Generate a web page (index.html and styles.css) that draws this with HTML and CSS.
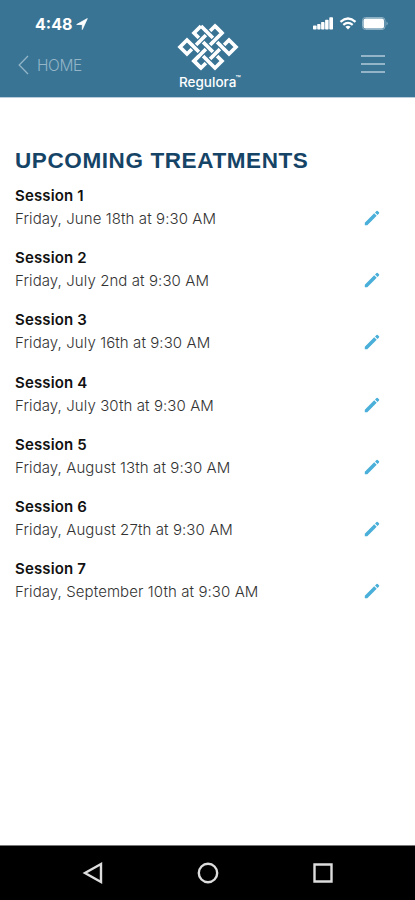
FILE: index.html
```html
<!DOCTYPE html>
<html lang="en">
<head>
<meta charset="utf-8">
<title>Regulora</title>
<link rel="stylesheet" href="styles.css">
</head>
<body>
<div class="screen">
  <header class="header">
    <div class="left">
      <div class="time">4:48 <svg width="12" height="12" viewBox="0 0 12 12"><path d="M11.300 .6 6.300 11.500V6.500H.7z" fill="#fff" stroke="#fff" stroke-width=".8" stroke-linejoin="round"/></svg></div>
      <a class="back"><svg width="11" height="20" viewBox="0 0 11 20"><path d="M10 1 1.200 10 10 19" fill="none" stroke="#93b5c7" stroke-width="1.300"/></svg><span>HOME</span></a>
    </div>
    <div class="brand">
      <svg class="knot" width="62" height="50" viewBox="-31 -25 62 50">
        <g transform="rotate(45) scale(9.900)" fill="none" stroke="#fff" stroke-width=".37">
          <path d="M-2-1H2V-2H1V2H0V1M-2-1V0H2V1H-2V2H-1V-2H0V2"/>
          <path d="M0 1V2H1M-1-2H0"/>
          <g stroke="#397495" stroke-width=".6">
            <path d="M-1.300-1h.6M.7-1h.6M-.3 0h.6M-1.300 1h.6M.7 1h.6M0-1.300v.6M-1-.3v.6M1-.3v.6M0 .7v.6"/>
          </g>
          <path d="M-1.350-1h.7M.65-1h.7M-.35 0h.7M-1.350 1h.7M.65 1h.7M0-1.350v.7M-1-.35v.7M1-.35v.7M0 .65v.7"/>
        </g>
      </svg>
      <div class="name">Regulora<span class="tm">™</span></div>
    </div>
    <div class="right">
      <div class="status">
        <svg width="21" height="13" viewBox="0 0 21 13" fill="#fff"><rect x="0" y="8.500" width="3.600" height="4" rx=".7"/><rect x="4.200" y="7" width="3.300" height="5.500" rx=".7"/><rect x="8.100" y="5" width="3.400" height="7.500" rx=".7"/><rect x="12.100" y="2.700" width="3.500" height="9.800" rx=".7"/><rect x="16.300" y=".3" width="3.700" height="12.200" rx=".7"/></svg>
        <svg width="18" height="13" viewBox="0 0 18 13" fill="none" stroke="#fff" stroke-width="2.200"><path d="M1.500 4.800Q9-1.800 16.500 4.800M4.300 7.900q4.700-4 9.400 0"/><path d="M6.400 9.800q2.600-2 5.200 0L9 12.600z" fill="#fff" stroke="none"/></svg>
        <svg width="27" height="13" viewBox="0 0 27 13"><rect x=".5" y=".5" width="22.500" height="12" rx="3" fill="none" stroke="#8db1c4"/><rect x="1.500" y="1.500" width="20.500" height="10" rx="2" fill="#fff"/><path d="M24.500 4.500q2.500 2 0 4z" fill="#8db1c4"/></svg>
      </div>
      <div class="menu"><i></i><i></i><i></i></div>
    </div>
  </header>
  <main class="content">
    <h1>UPCOMING TREATMENTS</h1>
    <section class="row"><div><h2>Session 1</h2><p>Friday, June 18th at 9:30 AM</p></div><svg class="pen" viewBox="0 0 16 16"><path d="M.8 15.200v-2.500l9.400-9.400 2.500 2.500-9.400 9.400zM11 2.500 12.500 1q.6-.5 1.200 0L15 2.300q.5.600 0 1.200L13.500 5z"/></svg></section>
    <section class="row"><div><h2>Session 2</h2><p>Friday, July 2nd at 9:30 AM</p></div><svg class="pen" viewBox="0 0 16 16"><path d="M.8 15.200v-2.500l9.400-9.400 2.500 2.500-9.400 9.400zM11 2.500 12.500 1q.6-.5 1.200 0L15 2.300q.5.600 0 1.200L13.500 5z"/></svg></section>
    <section class="row"><div><h2>Session 3</h2><p>Friday, July 16th at 9:30 AM</p></div><svg class="pen" viewBox="0 0 16 16"><path d="M.8 15.200v-2.500l9.400-9.400 2.500 2.500-9.400 9.400zM11 2.500 12.500 1q.6-.5 1.200 0L15 2.300q.5.600 0 1.200L13.500 5z"/></svg></section>
    <section class="row"><div><h2>Session 4</h2><p>Friday, July 30th at 9:30 AM</p></div><svg class="pen" viewBox="0 0 16 16"><path d="M.8 15.200v-2.500l9.400-9.400 2.500 2.500-9.400 9.400zM11 2.500 12.500 1q.6-.5 1.200 0L15 2.300q.5.600 0 1.200L13.500 5z"/></svg></section>
    <section class="row"><div><h2>Session 5</h2><p>Friday, August 13th at 9:30 AM</p></div><svg class="pen" viewBox="0 0 16 16"><path d="M.8 15.200v-2.500l9.400-9.400 2.500 2.500-9.400 9.400zM11 2.500 12.500 1q.6-.5 1.200 0L15 2.300q.5.600 0 1.200L13.500 5z"/></svg></section>
    <section class="row"><div><h2>Session 6</h2><p>Friday, August 27th at 9:30 AM</p></div><svg class="pen" viewBox="0 0 16 16"><path d="M.8 15.200v-2.500l9.400-9.400 2.500 2.500-9.400 9.400zM11 2.500 12.500 1q.6-.5 1.200 0L15 2.300q.5.600 0 1.200L13.500 5z"/></svg></section>
    <section class="row"><div><h2>Session 7</h2><p>Friday, September 10th at 9:30 AM</p></div><svg class="pen" viewBox="0 0 16 16"><path d="M.8 15.200v-2.500l9.400-9.400 2.500 2.500-9.400 9.400zM11 2.500 12.500 1q.6-.5 1.200 0L15 2.300q.5.600 0 1.200L13.500 5z"/></svg></section>
  </main>
  <nav class="nav">
    <svg width="22" height="24" viewBox="0 0 22 24"><path d="M19 3v18L3 12z"/></svg>
    <svg width="22" height="24" viewBox="0 0 22 24"><circle cx="11" cy="12" r="9.200"/></svg>
    <svg width="22" height="24" viewBox="0 0 22 24"><path d="M2.500 3.500h17v17h-17z"/></svg>
  </nav>
</div>
</body>
</html>
```

FILE: styles.css
```css
* { box-sizing: border-box; }
body { margin: 0; background: #fff; font-family: Inter, "Liberation Sans", sans-serif; }
h1, h2, p { margin: 0; white-space: nowrap; }
svg { display: block; flex: none; }
.screen { width: 415px; height: 900px; display: flex; flex-direction: column; overflow: hidden; }
.header { height: 98px; flex: none; background: #397495; border-bottom: 1px solid #b9cddc; display: grid; grid-template-columns: 178px 62px 1fr; color: #fff; }
.left { padding: 14px 0 0 18px; }
.time { display: flex; align-items: center; gap: 4px; margin-left: 17px; font-size: 16px; font-weight: 700; line-height: 20px; height: 20px; }
.back { display: flex; align-items: center; gap: 8px; height: 20px; margin-top: 21px; color: #93b5c7; font-size: 15.500px; font-weight: 300; letter-spacing: -.4px; }
.brand { padding-top: 22px; }
.knot { margin-left: -1px; }
.name { font-size: 13.500px; line-height: 16px; font-weight: 500; margin-top: 2px; margin-left: 1px; white-space: nowrap; display: flex; }
.tm { font-size: 8.500px; line-height: 10px; margin-left: -1px; }
.right { padding: 17px 28px 0 0; display: flex; flex-direction: column; align-items: flex-end; }
.status { display: flex; gap: 5px; height: 13px; margin-right: -2px; }
.menu { display: flex; flex-direction: column; gap: 6px; width: 24px; margin-top: 25px; margin-right: 2px; }
.menu i { height: 2px; background: #93b5c7; }
.content { flex: 1; padding: 49px 35px 0 15px; }
h1 { font: 700 22.500px/28px "Liberation Sans", sans-serif; color: #154467; letter-spacing: .6px; margin-bottom: 10px; }
.row { display: flex; justify-content: space-between; height: 62.200px; }
h2 { font-size: 15px; line-height: 22px; font-weight: 600; letter-spacing: .15px; color: #111; }
p { font-size: 15px; line-height: 24px; font-weight: 300; letter-spacing: .09px; color: #333; }
.pen { width: 16px; height: 16px; margin-top: 25px; fill: #4aafd9; }
.nav { height: 55px; flex: none; background: #000; border-top: 1px solid #777; display: flex; justify-content: space-between; align-items: center; padding: 0 81px 0 82px; }
.nav svg { fill: none; stroke: #ddd; stroke-width: 2.400; }
```
